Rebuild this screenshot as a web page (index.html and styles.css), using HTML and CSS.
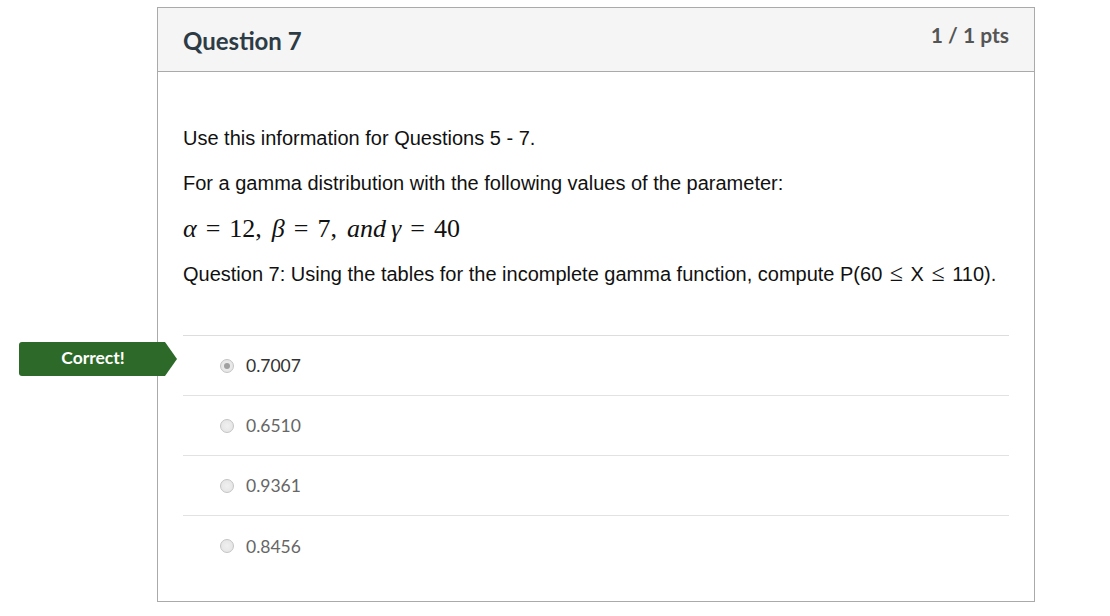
FILE: index.html
```html
<!DOCTYPE html>
<html>
<head>
<meta charset="utf-8">
<link rel="stylesheet" href="styles.css">
</head>
<body>
<div class="page">
  <div class="card">
    <div class="card-header">
      <h2 class="title">Question 7</h2>
      <div class="pts">1 / 1 pts</div>
    </div>
    <div class="card-body">
      <div class="question-text">
        <p>Use this information for Questions 5 - 7.</p>
        <p>For a gamma distribution with the following values of the parameter:</p>
        <p class="math"><i>α</i><span class="rel">=</span>12,<span class="sp"></span><i>β</i><span class="rel">=</span>7,<span class="sp"></span><i>and</i><span class="sp2"></span><i>γ</i><span class="rel">=</span>40</p>
        <p>Question 7: Using the tables for the incomplete gamma function, compute P(60 <span class="le">≤</span> X <span class="le">≤</span> 110).</p>
      </div>
      <div class="answers">
        <div class="answer selected">
          <div class="badge">Correct!</div>
          <span class="radio checked"></span>
          <span class="answer-text">0.7007</span>
        </div>
        <div class="answer">
          <span class="radio"></span>
          <span class="answer-text">0.6510</span>
        </div>
        <div class="answer">
          <span class="radio"></span>
          <span class="answer-text">0.9361</span>
        </div>
        <div class="answer last">
          <span class="radio"></span>
          <span class="answer-text">0.8456</span>
        </div>
      </div>
    </div>
  </div>
</div>
</body>
</html>
```

FILE: styles.css
```css
html, body {
  margin: 0;
  padding: 0;
  background: #ffffff;
}
.page {
  padding: 7px 0 0 157px;
}
.card {
  width: 876px;
  border: 1px solid #aaaaaa;
  background: #fff;
}
.card-header {
  height: 63px;
  background: #f5f5f5;
  border-bottom: 1px solid #aaaaaa;
  display: flex;
  justify-content: space-between;
  padding: 0 25px;
}
.title {
  margin: 0;
  padding-top: 18px;
  font-family: Lato, "Liberation Sans", sans-serif;
  font-weight: 700;
  font-size: 24px;
  line-height: 30px;
  color: #2d3b45;
}
.pts {
  padding-top: 14px;
  font-family: Lato, "Liberation Sans", sans-serif;
  font-weight: 700;
  font-size: 21px;
  line-height: 26px;
  color: #555555;
}
.card-body {
  padding: 52px 25px 25px 25px;
}
.question-text p {
  margin: 0 0 17px 0;
  font-family: "Liberation Sans", Arial, sans-serif;
  font-size: 20px;
  line-height: 28px;
  color: #111111;
}
.question-text p.math {
  font-family: "Liberation Serif", "Times New Roman", serif;
  font-size: 26px;
  line-height: 30px;
  margin-top: 0;
  margin-bottom: 16px;
}
.math i {
  font-style: italic;
}
.math .rel {
  padding: 0 9px;
}
.math .sp {
  display: inline-block;
  width: 10px;
}
.math .sp2 {
  display: inline-block;
  width: 5px;
}
.le {
  font-family: "Liberation Serif", "Times New Roman", serif;
  font-size: 24px;
  line-height: 20px;
  padding: 0 2px;
}
.answers {
  margin-top: 47px;
  border-top: 1px solid #dddddd;
}
.answer {
  position: relative;
  height: 60px;
  box-sizing: border-box;
  border-bottom: 1px solid #e2e2e2;
  display: flex;
  align-items: center;
  padding-left: 37px;
}
.answer.last {
  border-bottom: none;
}
.radio {
  width: 14px;
  height: 14px;
  border-radius: 50%;
  border: 1px solid #c4c4c4;
  background: radial-gradient(circle, #f0f0f0 0%, #e2e2e2 100%);
  box-sizing: border-box;
  position: relative;
  margin-right: 12px;
}
.radio.checked::after {
  content: "";
  position: absolute;
  left: 3px;
  top: 3px;
  width: 6px;
  height: 6px;
  border-radius: 50%;
  background: #a0a0a0;
}
.answer-text {
  font-family: Lato, "Liberation Sans", sans-serif;
  font-size: 17.5px;
  color: #666666;
}
.answer.selected .answer-text {
  color: #333333;
}
.badge {
  position: absolute;
  left: -164px;
  top: 6px;
  width: 146px;
  height: 34px;
  background: #2d6a29;
  border-radius: 3px 0 0 3px;
  color: #fff;
  font-family: Lato, "Liberation Sans", sans-serif;
  font-weight: 700;
  font-size: 17.5px;
  line-height: 32px;
  text-align: center;
  box-sizing: border-box;
  padding-left: 2px;
}
.badge::after {
  content: "";
  position: absolute;
  right: -12px;
  top: 0;
  width: 0;
  height: 0;
  border-top: 17px solid transparent;
  border-bottom: 17px solid transparent;
  border-left: 12px solid #2d6a29;
}
```
